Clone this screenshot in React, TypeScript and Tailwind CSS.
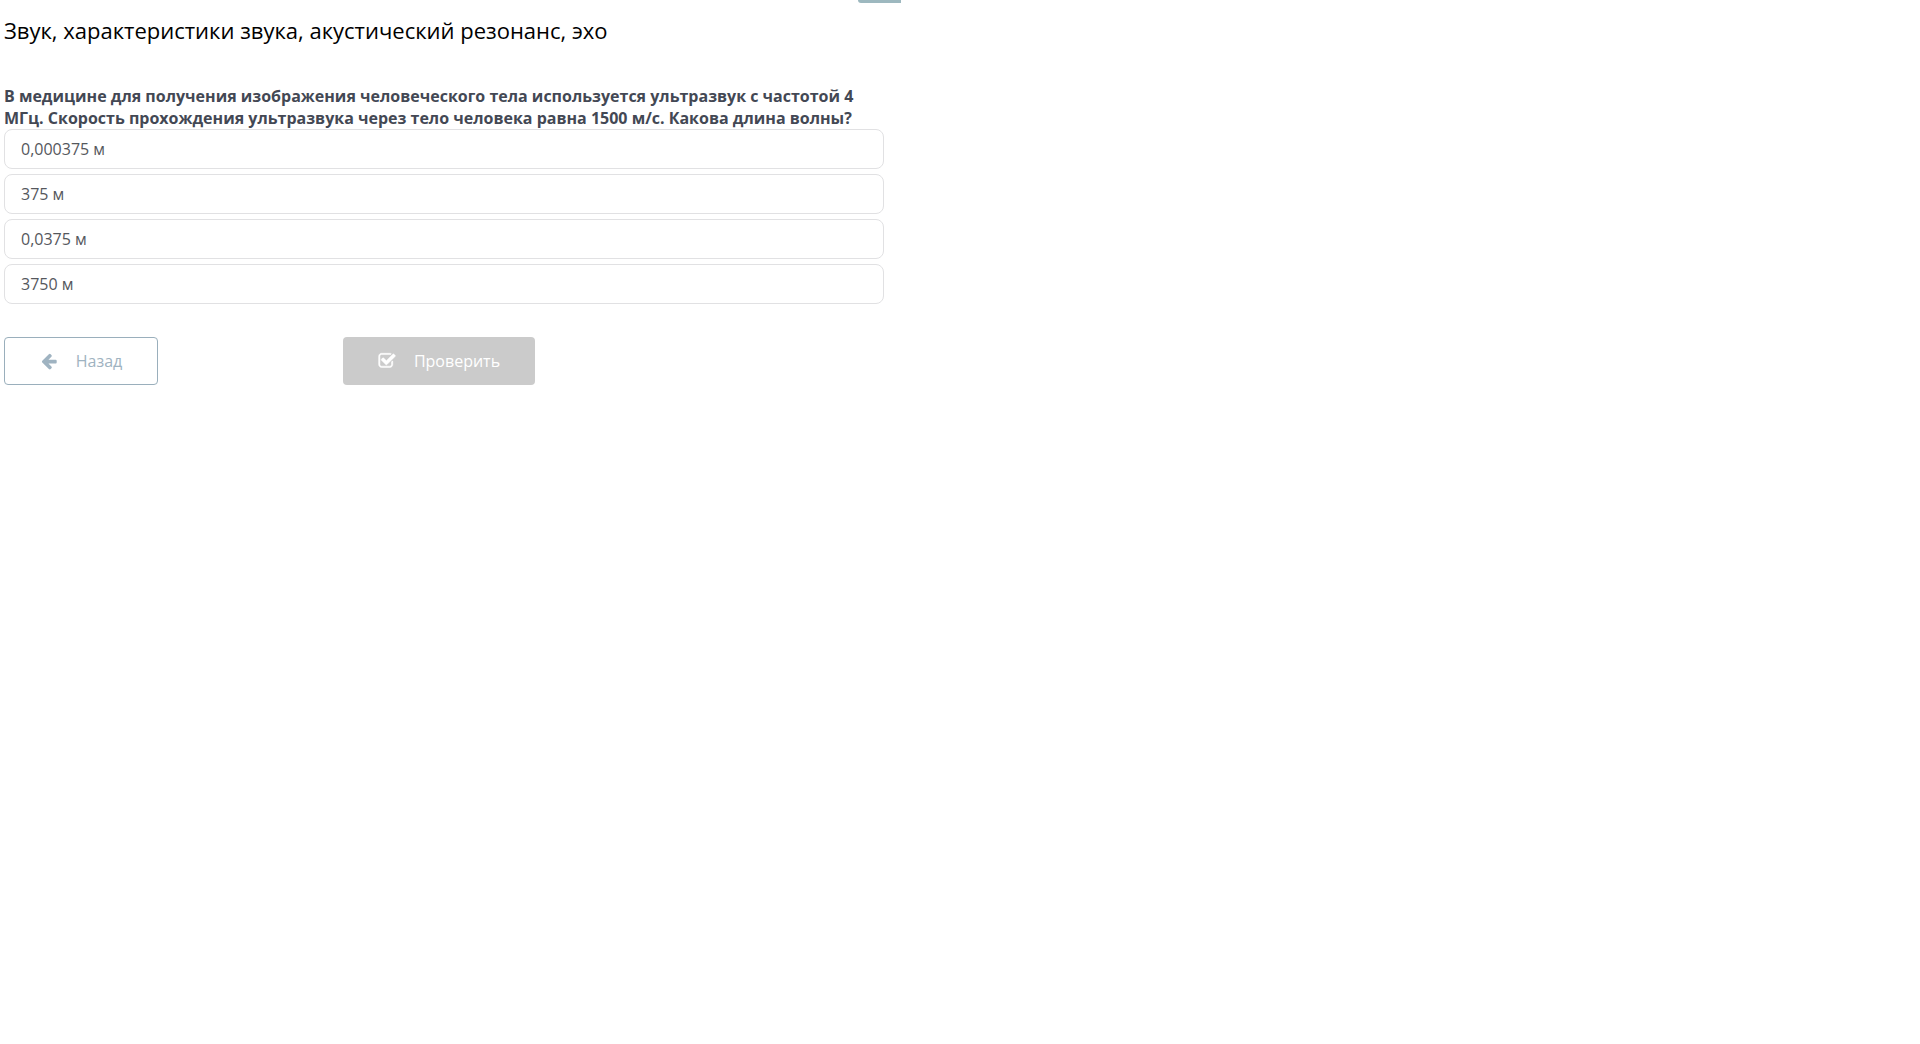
import { useState } from "react";

const options = ["0,000375 м", "375 м", "0,0375 м", "3750 м"];

function ArrowLeftIcon() {
    return (
        <svg viewBox="0 0 1792 1792" fill="currentColor" aria-hidden="true" className="w-[18px] h-[18px] shrink-0">
            <path d="M1664 896v128q0 53-32.5 90.5t-84.5 37.5h-704l293 294q38 36 38 90t-38 90l-75 76q-37 37-90 37-52 0-91-37l-651-652q-37-37-37-90 0-52 37-91l651-650q38-38 91-38 52 0 90 38l75 74q38 38 38 91t-38 91l-293 293h704q52 0 84.5 37.5t32.5 90.5z" />
        </svg>
    );
}

function CheckSquareIcon() {
    return (
        <svg viewBox="0 0 1792 1792" fill="currentColor" stroke="currentColor" strokeWidth={50} aria-hidden="true" className="w-[18px] h-[18px] shrink-0">
            <path d="M1472 930v318q0 119-84.5 203.5t-203.5 84.5h-832q-119 0-203.5-84.5t-84.5-203.5v-832q0-119 84.5-203.5t203.5-84.5h832q63 0 117 25 15 7 18 23 3 17-9 29l-49 49q-10 10-23 10-3 0-9-2-23-6-45-6h-832q-66 0-113 47t-47 113v832q0 66 47 113t113 47h832q66 0 113-47t47-113v-254q0-13 9-22l64-64q10-10 23-10 6 0 12 3 20 8 20 29zm231-489l-814 814q-24 24-57 24t-57-24l-430-430q-24-24-24-57t24-57l110-110q24-24 57-24t57 24l263 263 647-647q24-24 57-24t57 24l110 110q24 24 24 57t-24 57z" />
        </svg>
    );
}

export default function App() {
    const [answer, setAnswer] = useState<string | null>(null);

    return (
        <div className="min-h-screen bg-white font-['Open_Sans','Noto_Sans',sans-serif] text-base">
            <main className="max-w-[901px]">
                {/* Bottom edge of the header tab */}
                <div className="flex justify-end">
                    <div className="w-[43px] h-[3px] rounded-bl-md bg-[#9db8bf]" />
                </div>

                <div className="pl-1 pr-[17px]">
                    <h1 className="pt-[11px] text-[22px] leading-8 text-black">
                        Звук, характеристики звука, акустический резонанс, эхо
                    </h1>

                    <fieldset className="mt-[39px]">
                        <legend className="font-bold leading-[22px] text-[#434854]">
                            В медицине для получения изображения человеческого тела используется ультразвук с частотой 4 МГц. Скорость прохождения ультразвука через тело человека равна 1500 м/с. Какова длина волны?
                        </legend>
                        <div className="flex flex-col gap-[5px]">
                            {options.map((option) => (
                                <label
                                    key={option}
                                    className="flex items-center h-10 px-4 border border-[#e1e1e3] rounded-lg text-[#55585d] cursor-pointer has-checked:border-[#9aafbc]"
                                >
                                    <input
                                        type="radio"
                                        name="answer"
                                        value={option}
                                        checked={answer === option}
                                        onChange={() => setAnswer(option)}
                                        className="sr-only"
                                    />
                                    {option}
                                </label>
                            ))}
                        </div>
                    </fieldset>

                    {/* Actions */}
                    <div className="flex mt-[33px] gap-[185px]">
                        <button
                            type="button"
                            className="flex items-center justify-center gap-[18px] w-[154px] h-12 border border-[#9aafbc] rounded text-[#9fb3c1] cursor-pointer"
                        >
                            <ArrowLeftIcon />
                            Назад
                        </button>
                        <button
                            type="button"
                            disabled={answer === null}
                            className="flex items-center justify-center gap-[18px] w-48 h-12 rounded bg-[#9aafbc] text-white disabled:bg-[#cbcbcb]"
                        >
                            <CheckSquareIcon />
                            Проверить
                        </button>
                    </div>
                </div>
            </main>
        </div>
    );
}
